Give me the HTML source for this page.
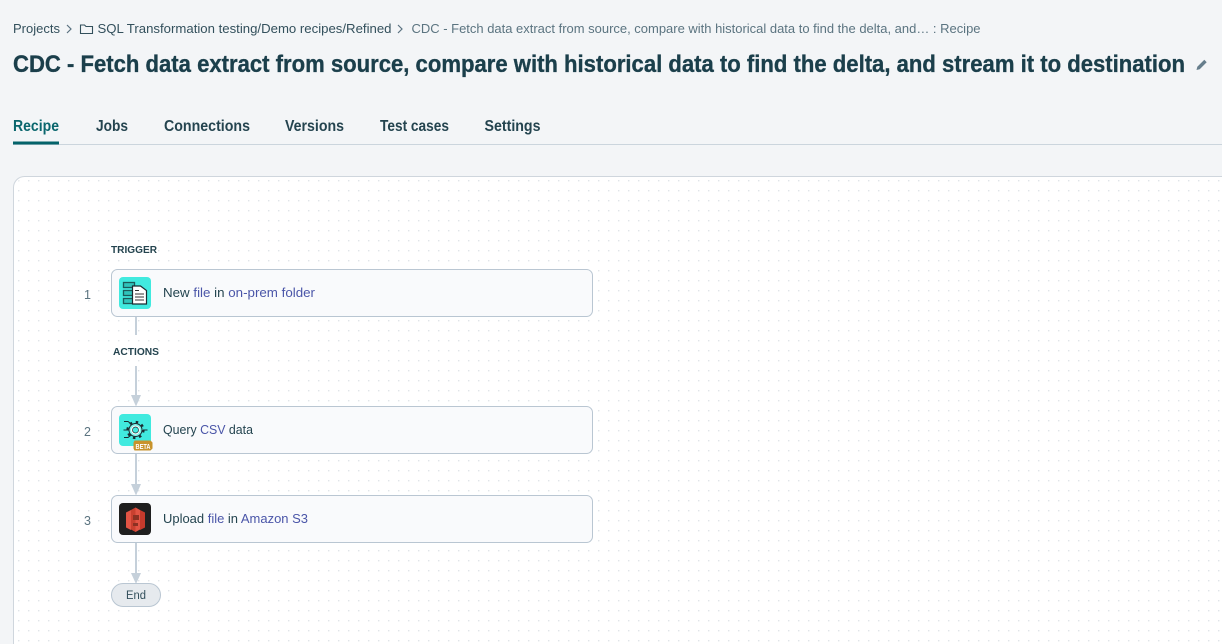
<!DOCTYPE html>
<html><head><meta charset="utf-8"><style>
html,body{margin:0;padding:0;width:1222px;height:644px;overflow:hidden;background:#f3f5f7}
svg{display:block;width:1222px;height:644px;overflow:hidden}
text{font-family:"Liberation Sans",sans-serif}
.c{font-size:13px;fill:#24444f}
.l{fill:#4a55a8}
</style></head><body>
<svg width="1222" height="644" viewBox="0 0 1222 644" xmlns="http://www.w3.org/2000/svg">
<defs>
<pattern id="d" x="18" y="180" width="10" height="10" patternUnits="userSpaceOnUse"><rect width="1.4" height="1.4" fill="#e0e4e8"/></pattern>
</defs>
<rect width="1222" height="644" fill="#f3f5f7"/>

<!-- breadcrumb -->
<text x="13" y="33" font-size="13" fill="#33505c" textLength="47" lengthAdjust="spacingAndGlyphs">Projects</text>
<path d="M67 25l4 4-4 4" fill="none" stroke="#5a7280" stroke-width="1.2"/>
<path d="M80.500 33.500v-8.500h4l1.500 1.500h6.500v7z" fill="none" stroke="#33505c" stroke-width="1.100"/>
<text x="97.500" y="33" font-size="13" fill="#33505c" textLength="294" lengthAdjust="spacingAndGlyphs">SQL Transformation testing/Demo recipes/Refined</text>
<path d="M398 25l4 4-4 4" fill="none" stroke="#5a7280" stroke-width="1.2"/>
<text x="411.500" y="33" font-size="13" fill="#5b7480" textLength="569" lengthAdjust="spacingAndGlyphs">CDC - Fetch data extract from source, compare with historical data to find the delta, and… : Recipe</text>

<!-- title -->
<text x="13" y="72" font-size="24" font-weight="700" fill="#1b3f4b" stroke="#1b3f4b" stroke-width="0.35" textLength="1172" lengthAdjust="spacingAndGlyphs">CDC - Fetch data extract from source, compare with historical data to find the delta, and stream it to destination</text>
<path d="M1196.500 70l.8-3.200 7-7 2.400 2.400-7 7z" fill="#667e8c"/>

<!-- tabs -->
<text x="13" y="131" font-size="15.500" font-weight="700" fill="#0a666d" textLength="46" lengthAdjust="spacingAndGlyphs">Recipe</text>
<text x="96" y="131" font-size="15.500" font-weight="700" fill="#24444f" textLength="32" lengthAdjust="spacingAndGlyphs">Jobs</text>
<text x="164" y="131" font-size="15.500" font-weight="700" fill="#24444f" textLength="86" lengthAdjust="spacingAndGlyphs">Connections</text>
<text x="285" y="131" font-size="15.500" font-weight="700" fill="#24444f" textLength="59" lengthAdjust="spacingAndGlyphs">Versions</text>
<text x="380" y="131" font-size="15.500" font-weight="700" fill="#24444f" textLength="69" lengthAdjust="spacingAndGlyphs">Test cases</text>
<text x="484.500" y="131" font-size="15.500" font-weight="700" fill="#24444f" textLength="56" lengthAdjust="spacingAndGlyphs">Settings</text>
<rect x="13" y="144" width="1209" height="1" fill="#cbd5dd"/>
<rect x="13" y="141.500" width="46" height="3" fill="#04636a"/>

<!-- canvas -->
<path d="M13.500 644V187.500a11 11 0 0 1 11-11H1222V644z" fill="#fff"/>
<path d="M15 644V188a10 10 0 0 1 10-10H1222V644z" fill="url(#d)"/>
<path d="M13.500 644V187.500a11 11 0 0 1 11-11H1222" fill="none" stroke="#cfd6dd"/>

<!-- connectors -->
<g fill="#c5d0da">
<rect x="135" y="317" width="2" height="18"/>
<rect x="135" y="366" width="2" height="30"/>
<path d="M131 395h10l-5 11.500z"/>
<rect x="135" y="454" width="2" height="31"/>
<path d="M131 484h10l-5 11.500z"/>
<rect x="135" y="543" width="2" height="31"/>
<path d="M131 573h10l-5 11z"/>
</g>

<text x="111" y="253" font-size="10.500" font-weight="700" fill="#24444f" textLength="46" lengthAdjust="spacingAndGlyphs">TRIGGER</text>
<text x="113" y="355" font-size="10.500" font-weight="700" fill="#24444f" textLength="46" lengthAdjust="spacingAndGlyphs">ACTIONS</text>

<g font-size="12.500" fill="#5b7480">
<text x="84" y="299">1</text>
<text x="84" y="436">2</text>
<text x="84" y="525">3</text>
</g>

<!-- cards -->
<g fill="#f9fafc" stroke="#b9c6d2">
<rect x="111.500" y="269.500" width="481" height="47" rx="6"/>
<rect x="111.500" y="406.500" width="481" height="47" rx="6"/>
<rect x="111.500" y="495.500" width="481" height="47" rx="6"/>
</g>

<!-- icon 1 -->
<rect x="119" y="277" width="32" height="32" rx="4" fill="#41eadf"/>
<g fill="#2fc4bb" stroke="#1c5a5a" stroke-width="1.300">
<rect x="123.500" y="282.500" width="11" height="5"/>
<rect x="123.500" y="290.500" width="11" height="5"/>
<rect x="123.500" y="298.500" width="11" height="5"/>
</g>
<path d="M132.500 286h8l6 4.500v13.500h-14z" fill="#fff" stroke="#1a2b30" stroke-width="1.200"/>
<path d="M135 290.500h4M135 294h9M135 297h9M135 300h9" stroke="#333" stroke-width="1"/>

<text class="c" x="163" y="297" textLength="152" lengthAdjust="spacingAndGlyphs">New <tspan class="l">file</tspan> in <tspan class="l">on-prem folder</tspan></text>

<!-- icon 2 -->
<rect x="119" y="414" width="32" height="32" rx="4" fill="#41eadf"/>
<path d="M124 421.500h4l4 3M123.500 430h5M124 437.500h4l4-3M143 430h4.500" fill="none" stroke="#1a2b30" stroke-width="1"/>
<circle cx="135.500" cy="430" r="8" fill="none" stroke="#1a2b30" stroke-width="2.200" stroke-dasharray="2.500 3.780"/>
<circle cx="135.500" cy="430" r="6.500" fill="#7ff3ea" stroke="#1a2b30" stroke-width="1"/>
<circle cx="135.500" cy="430" r="3.700" fill="#41eadf" stroke="#ffffff" stroke-width="1.400"/>
<circle cx="135.500" cy="430" r="3" fill="none" stroke="#1a2b30" stroke-width=".7"/>
<path d="M134.500 440.500h16l2 2v6l-2 2h-16l-1-2v-6z" fill="#c8932b"/>
<text x="135.500" y="448.800" font-size="7.500" font-weight="700" fill="#fff" textLength="15" lengthAdjust="spacingAndGlyphs">BETA</text>

<text class="c" x="163" y="434" textLength="90" lengthAdjust="spacingAndGlyphs">Query <tspan class="l">CSV</tspan> data</text>

<!-- icon 3 -->
<rect x="119" y="503" width="32" height="32" rx="4" fill="#1f1f1f"/>
<path d="M126 512.500l5-2.500v20l-5-2.500z" fill="#e25444"/>
<path d="M145 512.500l-5-2.500v20l5-2.500z" fill="#c63a2c"/>
<path d="M131 510l4.500-2.500V532l-4.500-2.500z" fill="#c9402f"/>
<path d="M140 510l-4.500-2.500V532l4.500-2.500z" fill="#e25444"/>
<path d="M133 515h6v5h-6zM133 523h5v3h-5z" fill="#8c3123"/>

<text class="c" x="163" y="523" textLength="145" lengthAdjust="spacingAndGlyphs">Upload <tspan class="l">file</tspan> in <tspan class="l">Amazon S3</tspan></text>

<!-- end -->
<rect x="111.500" y="583.500" width="49" height="23" rx="11.500" fill="#e6eaee" stroke="#b9c6d2"/>
<text x="126" y="599" font-size="11.500" fill="#33505c" textLength="20" lengthAdjust="spacingAndGlyphs">End</text>
</svg>
</body></html>
